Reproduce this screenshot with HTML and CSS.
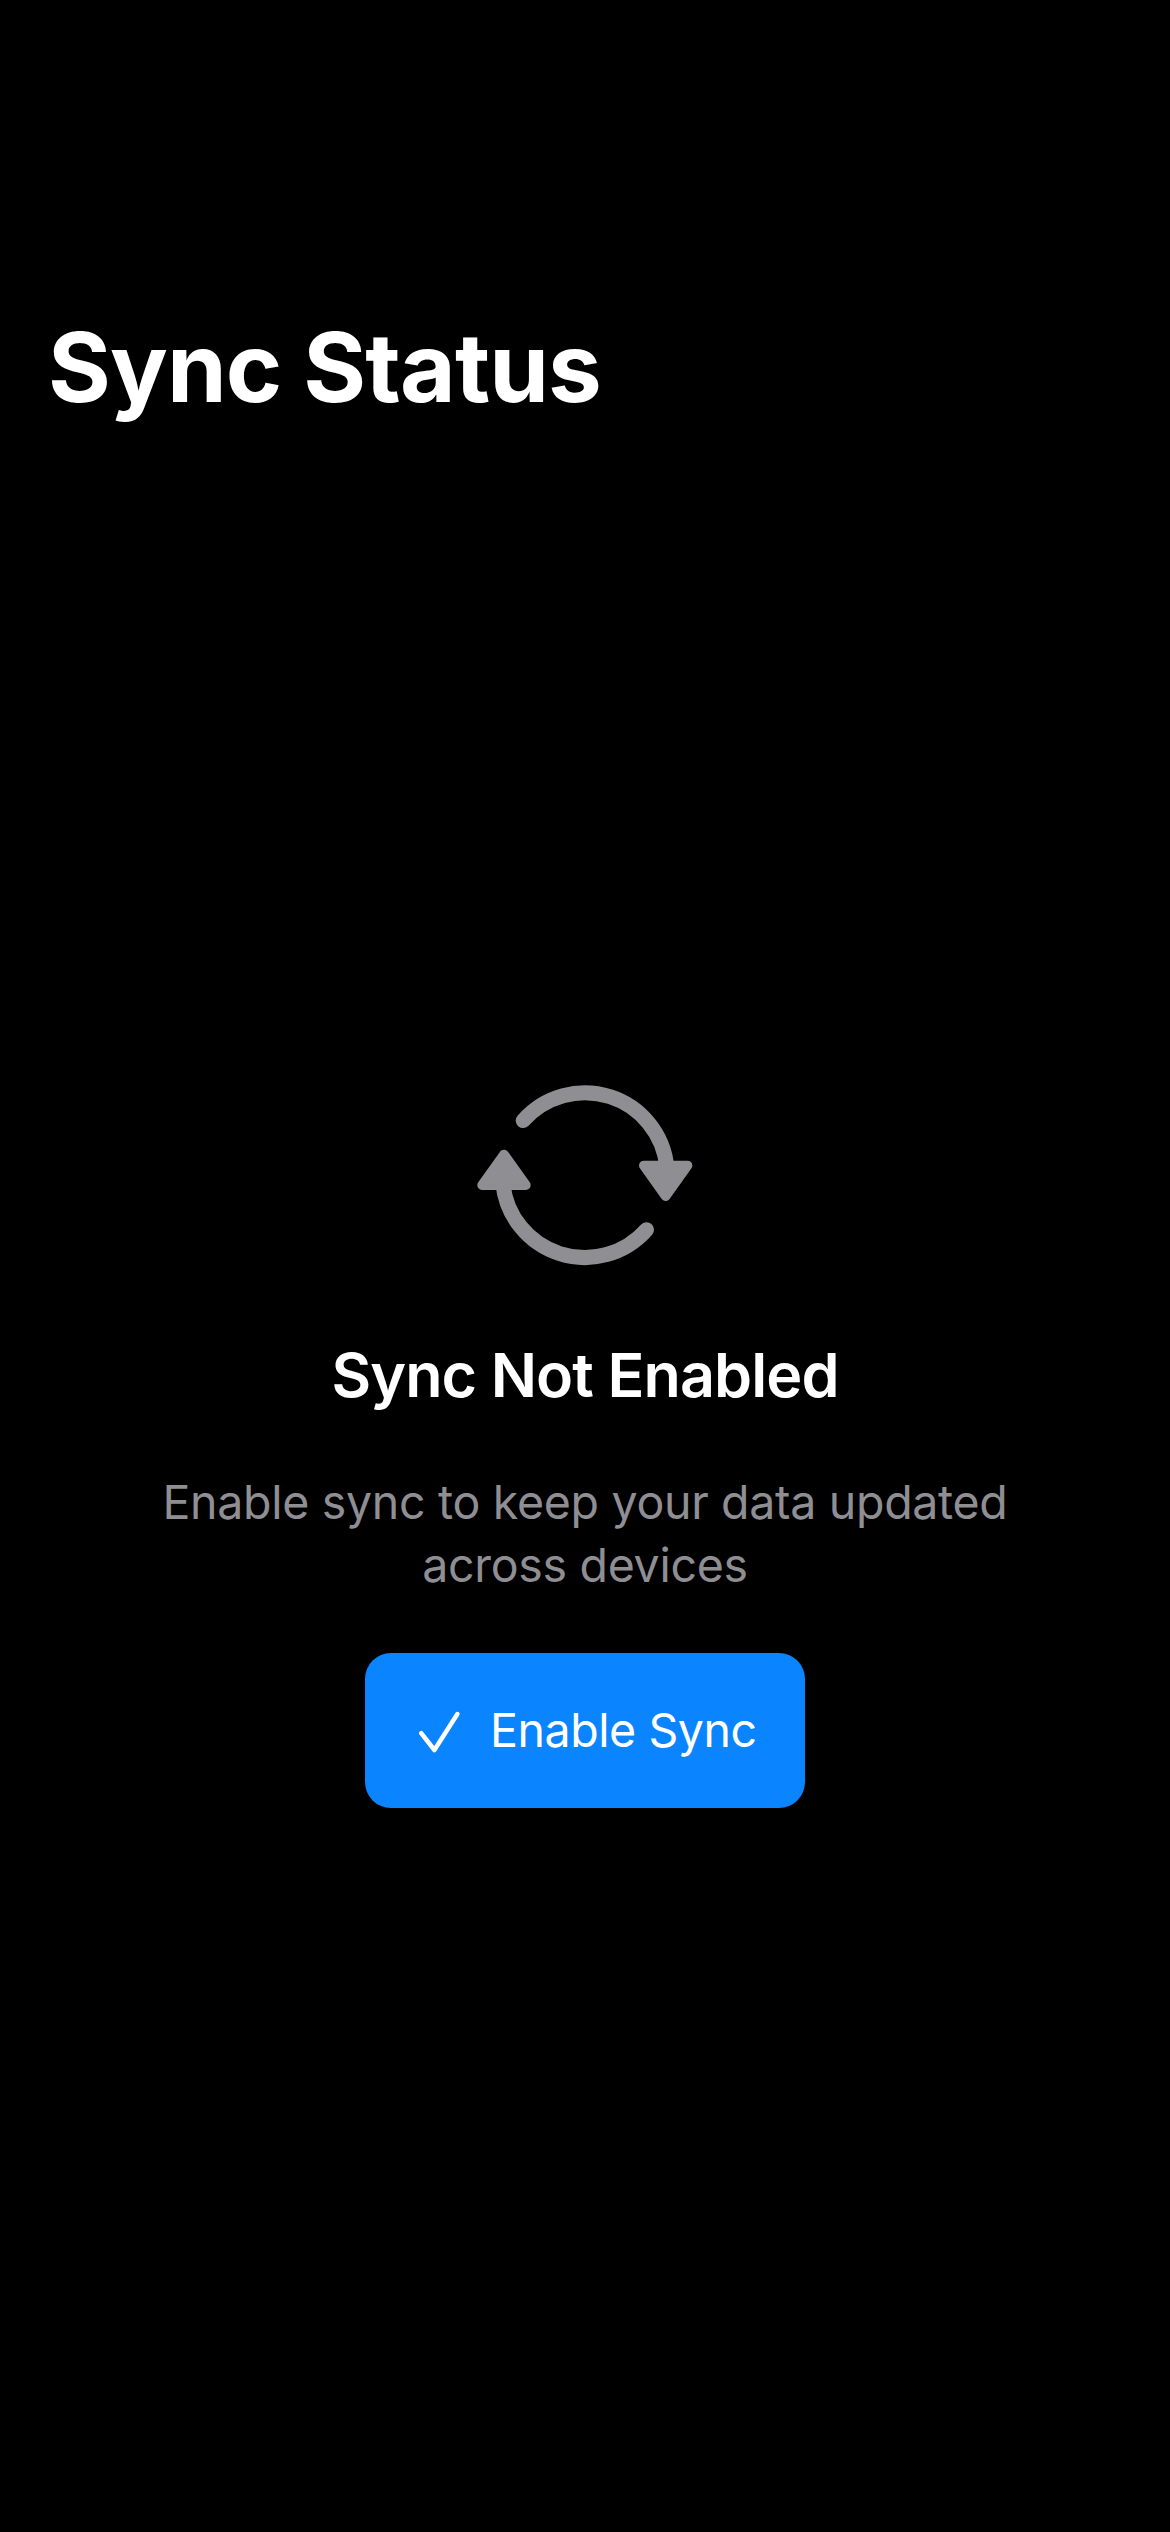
FILE: index.html
```html
<!DOCTYPE html>
<html lang="en">
<head>
<meta charset="utf-8">
<title>Sync Status</title>
<link rel="stylesheet" href="styles.css">
</head>
<body>
<main class="screen">
  <h1 class="title">Sync Status</h1>
  <section class="empty-state">
    <svg class="sync-icon" viewBox="51 39 648 549" aria-hidden="true">
      <g class="arc">
        <path d="M189.500 151.800A247 247 0 0 1 620.300 290"/>
        <path d="M559.500 479.200A247 247 0 0 1 128.700 341"/>
      </g>
      <g class="head">
        <path d="M551.500 286.500H682.500L617 378.500Z"/>
        <path d="M66.500 345.500H197.500L132 253.500Z"/>
      </g>
    </svg>
    <h2 class="heading">Sync Not Enabled</h2>
    <p class="message">Enable sync to keep your data updated<br>across devices</p>
    <button class="enable" type="button">
      <svg class="check-icon" viewBox="0 0 42 42" aria-hidden="true"><path d="M2.200 22.200L15.400 39L38.400 3"/></svg>
      <span>Enable Sync</span>
    </button>
  </section>
</main>
</body>
</html>
```
FILE: styles.css
```css
* {
  box-sizing: border-box;
}

body {
  margin: 0;
  background: #000;
  color: #fff;
  font-family: Inter, "Liberation Sans", sans-serif;
}

.screen {
  display: flex;
  flex-direction: column;
  height: 2532px;
  padding-top: 307px;
}

.title {
  margin: 0;
  padding: 0 48px;
  font-size: 96px;
  font-weight: 700;
  line-height: 120px;
  letter-spacing: -0.87px;
}

.empty-state {
  display: flex;
  flex-direction: column;
  align-items: center;
  padding-top: 656px;
}

.sync-icon {
  width: 216px;
  height: 183px;
}

.arc {
  fill: none;
  stroke: #8e8e93;
  stroke-width: 45;
  stroke-linecap: round;
}

.head {
  fill: #8e8e93;
  stroke: #8e8e93;
  stroke-width: 29;
  stroke-linejoin: round;
}

.heading {
  margin: 71px 0 0;
  font-size: 61px;
  font-weight: 600;
  line-height: 76px;
  letter-spacing: -0.9px;
}

.message {
  margin: 58px 0 56px;
  color: #8e8e93;
  font-size: 46.5px;
  line-height: 63px;
  letter-spacing: -0.31px;
  text-align: center;
}

.enable {
  display: flex;
  align-items: center;
  gap: 29px;
  width: 440px;
  height: 155px;
  padding: 0 0 0 54px;
  border: 0;
  border-radius: 26px;
  background: #0a84ff;
  color: #fff;
  font: 400 46.5px/63px Inter, "Liberation Sans", sans-serif;
  letter-spacing: -0.43px;
  white-space: nowrap;
}

.check-icon {
  width: 42px;
  height: 42px;
  margin-top: 3px;
  overflow: visible;
  fill: none;
  stroke: #fff;
  stroke-width: 4.5;
  stroke-linecap: round;
  stroke-linejoin: round;
}
```
